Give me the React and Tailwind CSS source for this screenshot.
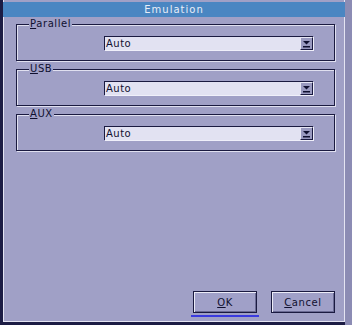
import React from 'react';

const FONT = { fontFamily: '"DejaVu Sans", "Liberation Sans", sans-serif' };

function Mnemonic({ text }) {
  return (
    <>
      <span className="underline underline-offset-1">{text[0]}</span>
      {text.slice(1)}
    </>
  );
}

function ComboBox({ value }) {
  return (
    <div className="flex h-[14px] w-[209px] border-t border-l border-[#1a1a40] bg-[#e2e2f2] shadow-[1px_1px_0_#f0f0fa]">
      <span className="flex-1 pl-[1px] text-[10px] leading-[13px] text-[#101030] tracking-[0.5px]">{value}</span>
      <div className="flex h-[13px] w-[13px] items-center justify-center border-t border-l border-[#e8e8f6] border-r border-b border-r-[#1a1a40] border-b-[#1a1a40] bg-[#9a9ac0]">
        <svg width="9" height="8" viewBox="0 0 9 8">
          <polygon points="1,1 8,1 4.5,4.5" fill="#101030" />
          <rect x="1" y="6" width="7" height="1.5" fill="#101030" />
        </svg>
      </div>
    </div>
  );
}

function GroupBox({ label }) {
  return (
    <div className="relative h-[37px] w-[319px] border border-[#1a1a40] shadow-[1px_1px_0_#e0e0f0,inset_1px_1px_0_#e0e0f0]">
      <span className="absolute left-[12px] top-[-6px] bg-[#a0a0c6] px-[1px] text-[10px] leading-[10px] text-[#101030] tracking-[0.6px]">
        <Mnemonic text={label} />
      </span>
      <div className="flex pl-[87px] pt-[11px]">
        <ComboBox value="Auto" />
      </div>
    </div>
  );
}

function Button({ label, active }) {
  return (
    <div className="flex flex-col items-center gap-[2px]">
      <button className="h-[22px] w-[64px] border border-[#1a1a40] bg-[#a0a0c8] text-[10px] text-[#101030] tracking-[0.6px] shadow-[inset_1px_1px_0_#ececf8,inset_-1px_-1px_0_#6a6a94]">
        <Mnemonic text={label} />
      </button>
      <div className={`h-[2px] w-[68px] ${active ? 'bg-[#3a3ae0]' : 'bg-transparent'}`} />
    </div>
  );
}

export default function App() {
  return (
    <div style={FONT} className="flex h-[325px] w-[352px] bg-[#8c8cb4]">
      <div className="flex h-[325px] w-[345px] flex-col border-l-[3px] border-b-[3px] border-[#1c1c44] bg-[#a0a0c6] pt-[2px] shadow-[inset_1px_0_0_#e4e4f2,inset_-1px_-1px_0_#e4e4f2]">
        <div className="flex h-[15px] items-center justify-center bg-[#4a86c2] text-[10px] text-[#e8eef8] tracking-[1px]">
          Emulation
        </div>
        <div className="flex flex-1 flex-col gap-[8px] pl-[13px] pt-[7px]">
          <GroupBox label="Parallel" />
          <GroupBox label="USB" />
          <GroupBox label="AUX" />
        </div>
        <div className="flex justify-end gap-[10px] pr-[8px] pb-[5px]">
          <Button label="OK" active />
          <Button label="Cancel" />
        </div>
      </div>
    </div>
  );
}
